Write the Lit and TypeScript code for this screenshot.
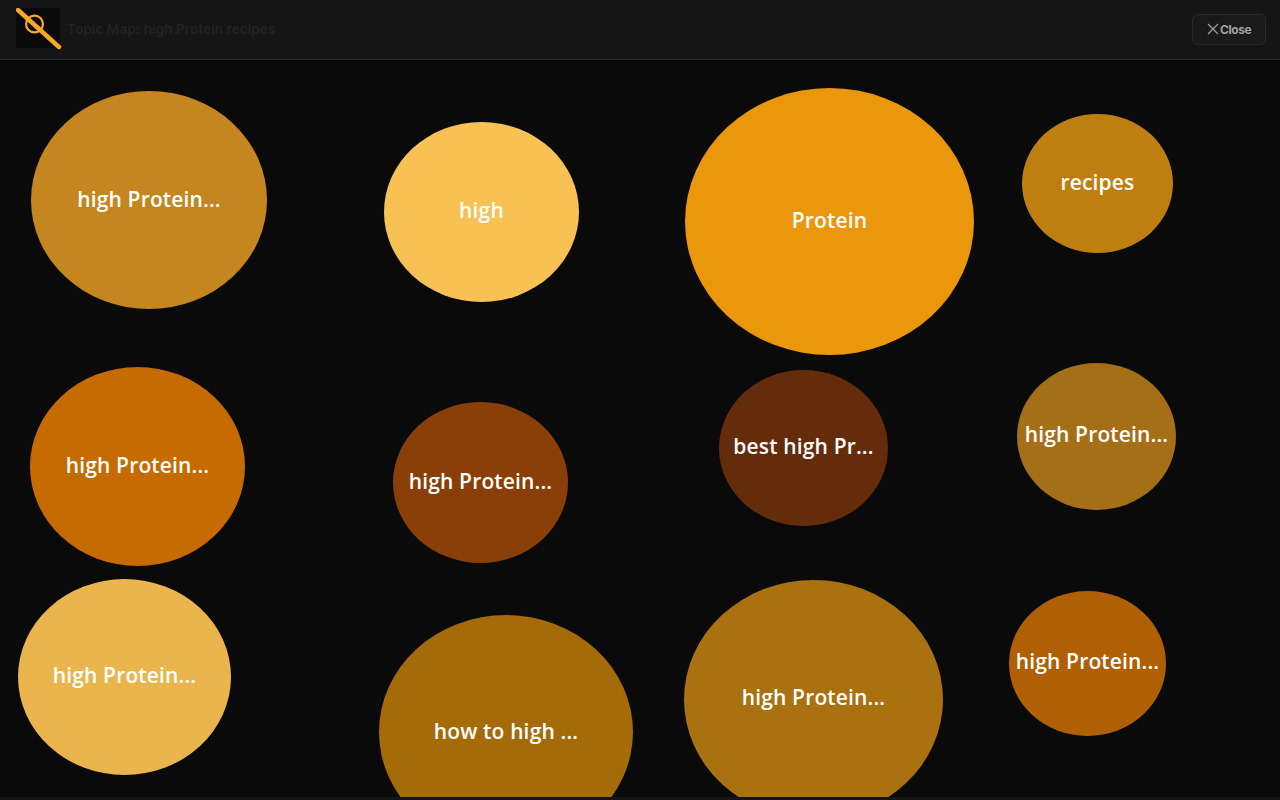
import {LitElement, html, css} from "lit";
import {customElement} from "lit/decorators.js";

// lift = how far the label sits above the bubble's centre, doubled (it is applied as bottom padding)
type Bubble = {label: string; left: number; top: number; w: number; h: number; color: string; lift: number};

const bubbles: Bubble[] = [
    {label: "high Protein...", left: 31, top: 91, w: 236, h: 218, color: "#c58620", lift: 2},
    {label: "high", left: 384, top: 122, w: 195, h: 180, color: "#f8c154", lift: 4},
    {label: "Protein", left: 685, top: 88, w: 289, h: 267, color: "#eb970b", lift: 4},
    {label: "recipes", left: 1022, top: 114, w: 151, h: 139, color: "#be7f10", lift: 4},
    {label: "high Protein...", left: 30, top: 367, w: 215, h: 199, color: "#c66a02", lift: 4},
    {label: "high Protein...", left: 393, top: 402, w: 175, h: 161, color: "#8a3f08", lift: 4},
    {label: "best high Pr...", left: 719, top: 370, w: 169, h: 156, color: "#652c0c", lift: 4},
    {label: "high Protein...", left: 1017, top: 363, w: 159, h: 147, color: "#a56f17", lift: 6},
    {label: "high Protein...", left: 18, top: 579, w: 213, h: 196, color: "#ebb54e", lift: 4},
    {label: "how to high ...", left: 379, top: 615, w: 254, h: 234, color: "#a56b08", lift: 2},
    {label: "high Protein...", left: 684, top: 580, w: 259, h: 239, color: "#a97110", lift: 6},
    {label: "high Protein...", left: 1009, top: 591, w: 157, h: 145, color: "#b05f04", lift: 6},
];

@customElement("app-root")
export class AppRoot extends LitElement {
    static styles = css`
        :host {
            display: flex;
            flex-direction: column;
            width: 1280px;
            height: 800px;
            overflow: hidden;
            background: #0a0a0a;
            font-family: "Inter", "Liberation Sans", sans-serif;
        }

        .header {
            flex: none;
            box-sizing: border-box;
            height: 60px;
            display: flex;
            align-items: center;
            justify-content: space-between;
            padding: 0 14px 2px 16px;
            background: #151515;
            border-bottom: 1px solid #2a2a2a;
        }

        .title-wrap {
            align-self: flex-start;
            display: flex;
            align-items: center;
            gap: 5px;
            padding-top: 8px;
        }

        .logo {
            display: block;
            width: 46px;
            height: 42px;
        }

        .title {
            font-size: 13.7px;
            font-weight: 600;
            color: #232323;
        }

        .close {
            display: flex;
            align-items: center;
            gap: 1px;
            box-sizing: border-box;
            width: 74px;
            height: 31px;
            margin-top: 1px;
            padding: 0 0 0 14px;
            background: #1a1a1a;
            border: 1px solid #2a2a2a;
            border-radius: 6px;
            font-family: inherit;
            font-size: 12px;
            font-weight: 700;
            letter-spacing: -0.45px;
            color: #a3a3a3;
        }

        .close svg {
            display: block;
            width: 12px;
            height: 12px;
        }

        .canvas {
            position: relative;
            flex: 1;
            overflow: hidden;
        }

        .bubble {
            position: absolute;
            display: flex;
            align-items: center;
            justify-content: center;
            box-sizing: border-box;
            border-radius: 50%;
            font-family: "Open Sans", "Noto Sans", sans-serif;
            font-size: 21px;
            font-weight: 600;
            letter-spacing: 0.15px;
            color: #fff;
            white-space: nowrap;
        }

        .footer {
            flex: none;
            height: 3px;
            background: #151515;
        }
    `;

    override render() {
        return html`
            <div class="header">
                <div class="title-wrap">
                    <svg class="logo" viewBox="0 0 46 42">
                        <rect x="0" y="0" width="44" height="40" fill="#0a0a0a"></rect>
                        <circle cx="18.5" cy="16" r="8.4" fill="none" stroke="#f9a826" stroke-width="2.2"></circle>
                        <line x1="2" y1="2" x2="43" y2="39" stroke="#f9a826" stroke-width="4.4" stroke-linecap="round"></line>
                    </svg>
                    <span class="title">Topic Map: high Protein recipes</span>
                </div>
                <button class="close">
                    <svg viewBox="0 0 12 12"><path d="M1 1l10 10M11 1l-10 10" stroke="#a3a3a3" stroke-width="1.1" fill="none"></path></svg>
                    Close
                </button>
            </div>
            <div class="canvas">
                ${bubbles.map(
                    (b) => html`<div
                        class="bubble"
                        style="left:${b.left}px;top:${b.top - 60}px;width:${b.w}px;height:${b.h}px;background:${b.color};padding-bottom:${b.lift}px"
                    >${b.label}</div>`
                )}
            </div>
            <div class="footer"></div>
        `;
    }
}
